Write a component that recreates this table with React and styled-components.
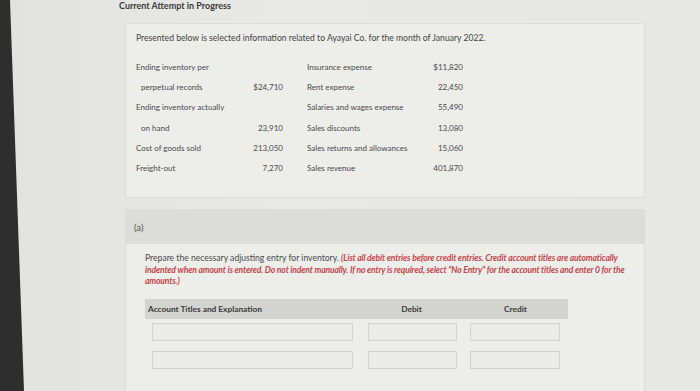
import styled, { createGlobalStyle } from "styled-components";

const GlobalStyle = createGlobalStyle`
    html, body {
        margin: 0;
        padding: 0;
        background-color: #e5e5e2;
    }
    body {
        font-family: Lato, "Open Sans", sans-serif;
        color: #3d3d3d;
    }
`;

const leftRows = [
    { label: "Ending inventory per", value: "" },
    { label: "perpetual records", value: "$24,710", indent: true },
    { label: "Ending inventory actually", value: "" },
    { label: "on hand", value: "23,910", indent: true },
    { label: "Cost of goods sold", value: "213,050" },
    { label: "Freight-out", value: "7,270" },
];

const rightRows = [
    { label: "Insurance expense", value: "$11,820" },
    { label: "Rent expense", value: "22,450" },
    { label: "Salaries and wages expense", value: "55,490" },
    { label: "Sales discounts", value: "13,080" },
    { label: "Sales returns and allowances", value: "15,060" },
    { label: "Sales revenue", value: "401,870" },
];

export default function App() {
    return (
        <Screen>
            <GlobalStyle />
            <Bezel />
            <Main>
                <Heading>Current Attempt in Progress</Heading>
                <InfoPanel>
                    <Intro>Presented below is selected information related to Ayayai Co. for the month of January 2022.</Intro>
                    <DataGrid>
                        {leftRows.map((row, i) => [
                            <Label key={"l" + i} $indent={row.indent}>{row.label}</Label>,
                            <Amount key={"a" + i}>{row.value}</Amount>,
                            <span key={"s" + i}></span>,
                            <Label key={"r" + i}>{rightRows[i].label}</Label>,
                            <Amount key={"b" + i}>{rightRows[i].value}</Amount>,
                        ])}
                    </DataGrid>
                </InfoPanel>
                <PartPanel>
                    <PartHead>(a)</PartHead>
                    <PartBody>
                        <Instructions>
                            Prepare the necessary adjusting entry for inventory. <Note>(List all debit entries before credit entries. Credit account titles are automatically indented when amount is entered. Do not indent manually. If no entry is required, select "No Entry" for the account titles and enter 0 for the amounts.)</Note>
                        </Instructions>
                        <EntryTable>
                            <HeadCell>Account Titles and Explanation</HeadCell>
                            <HeadCell $center>Debit</HeadCell>
                            <HeadCell $center>Credit</HeadCell>
                            {[0, 1].map((r) => [
                                <Field key={"t" + r} $left={7} $width={201} />,
                                <Field key={"d" + r} $left={8} $width={89} />,
                                <Field key={"c" + r} $left={7} $width={90} />,
                            ])}
                        </EntryTable>
                    </PartBody>
                </PartPanel>
            </Main>
        </Screen>
    );
}

const Screen = styled.div`
    width: 700px;
    height: 391px;
    display: flex;
    overflow: hidden;
    background: linear-gradient(90deg, #e2e2df 0%, #e9e9e6 40%, #e7e7e4 100%);
`;

const Bezel = styled.div`
    width: 25px;
    flex-shrink: 0;
    background-color: #2e2e2e;
    clip-path: polygon(0 0, 10px 0, 24px 100%, 0 100%);
`;

const Main = styled.div`
    flex: 1;
    padding: 0 0 0 94px;
    display: flex;
    flex-direction: column;
`;

const Heading = styled.div`
    font-size: 9px;
    font-weight: 700;
    color: #3a3a3a;
    line-height: 12px;
    height: 23px;
`;

const InfoPanel = styled.div`
    margin-left: 6px;
    width: 520px;
    box-sizing: border-box;
    padding: 8px 10px 19px 10px;
    background-color: #ededea;
    border: 1px solid #dcdcd9;
    border-radius: 2px;
`;

const Intro = styled.div`
    font-size: 8.6px;
    line-height: 12px;
    color: #444;
    margin-bottom: 13px;
`;

const DataGrid = styled.div`
    display: grid;
    grid-template-columns: 105px 42px 24px 120px 36px;
    grid-auto-rows: 20.2px;
    align-items: center;
    font-size: 8px;
    color: #4a4a4a;
`;

const Label = styled.span`
    padding-left: ${(p) => (p.$indent ? "5px" : "0")};
    white-space: nowrap;
`;

const Amount = styled.span`
    text-align: right;
    white-space: nowrap;
`;

const PartPanel = styled.div`
    margin: 11px 0 0 6px;
    width: 520px;
    flex: 1;
    box-sizing: border-box;
    background-color: #ededea;
    border: 1px solid #dcdcd9;
    border-bottom: none;
    border-radius: 2px 2px 0 0;
`;

const PartHead = styled.div`
    height: 34px;
    display: flex;
    align-items: center;
    padding-left: 8px;
    font-size: 9.5px;
    color: #555;
    background-color: #dcdcd9;
`;

const PartBody = styled.div`
    padding: 9px 14px 0 19px;
`;

const Instructions = styled.div`
    font-size: 8.6px;
    line-height: 11.5px;
    color: #4a4a4a;
`;

const Note = styled.span`
    color: #c4464a;
    font-style: italic;
    font-weight: 700;
    letter-spacing: -0.15px;
`;

const EntryTable = styled.div`
    margin-top: 11px;
    width: 423px;
    display: grid;
    grid-template-columns: 215px 103px 105px;
    grid-template-rows: 20px 28px 28px;
`;

const HeadCell = styled.div`
    background-color: #d3d3d0;
    font-size: 8.3px;
    font-weight: 700;
    color: #3a3a3a;
    display: flex;
    align-items: center;
    justify-content: ${(p) => (p.$center ? "center" : "flex-start")};
    padding-left: ${(p) => (p.$center ? "0" : "3px")};
`;

const Field = styled.div`
    margin: 4px 0 0 ${(p) => p.$left}px;
    width: ${(p) => p.$width}px;
    height: 18px;
    box-sizing: border-box;
    border: 1px solid #d2d2cf;
    background-color: #ebebe8;
`;
